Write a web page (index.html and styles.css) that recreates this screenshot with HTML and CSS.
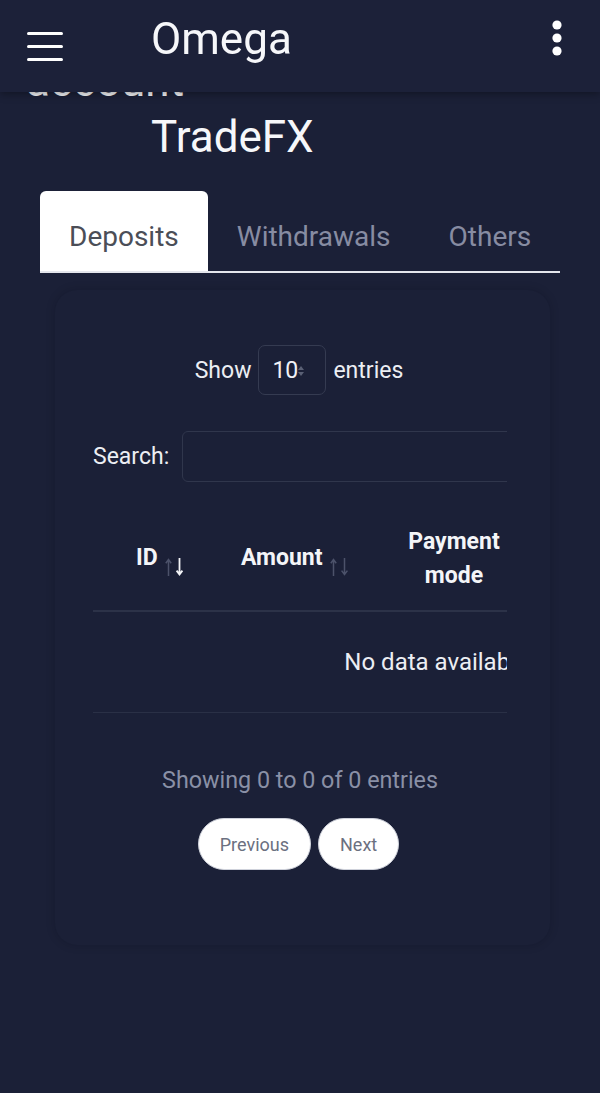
FILE: index.html
```html
<!DOCTYPE html>
<html lang="en">
<head>
    <meta charset="UTF-8">
    <title>Omega - Transactions</title>
    <link rel="stylesheet" href="styles.css">
</head>
<body>
    <header class="topbar">
        <button class="icon-btn menu-btn" aria-label="Menu">
            <svg width="36" height="30" viewBox="0 0 36 30">
                <rect x="0" y="1" width="36" height="3" rx="1.5" fill="#fff"/>
                <rect x="0" y="14" width="36" height="3" rx="1.5" fill="#fff"/>
                <rect x="0" y="27" width="36" height="3" rx="1.5" fill="#fff"/>
            </svg>
        </button>
        <div class="brand">Omega</div>
        <button class="icon-btn more-btn" aria-label="More">
            <svg width="10" height="36" viewBox="0 0 10 36">
                <circle cx="5" cy="5" r="4.6" fill="#fff"/>
                <circle cx="5" cy="18" r="4.6" fill="#fff"/>
                <circle cx="5" cy="31" r="4.6" fill="#fff"/>
            </svg>
        </button>
    </header>

    <main class="page">
        <div class="page-sub">account</div>
        <h1 class="page-title">TradeFX</h1>

        <nav class="tabs">
            <a class="tab active" href="#">Deposits</a>
            <a class="tab" href="#">Withdrawals</a>
            <a class="tab" href="#">Others</a>
        </nav>

        <section class="card">
            <div class="length-row">
                <span>Show</span>
                <div class="select">
                    10
                    <svg class="select-arrows" width="8" height="14" viewBox="0 0 8 14">
                        <path d="M1 6 L4 2 L7 6 Z" fill="#5a6075"/>
                        <path d="M1 8 L4 12 L7 8 Z" fill="#5a6075"/>
                    </svg>
                </div>
                <span>entries</span>
            </div>

            <div class="scroll-area">
                <div class="search-row">
                    <label for="search">Search:</label>
                    <input id="search" class="search-input" type="text">
                </div>

                <table class="data-table">
                    <colgroup>
                        <col style="width:120px">
                        <col style="width:177px">
                        <col style="width:128px">
                        <col style="width:176px">
                        <col style="width:170px">
                    </colgroup>
                    <thead>
                        <tr>
                            <th class="col-id">ID<span class="sort">
                                <svg width="20" height="20" viewBox="0 0 20 20">
                                    <path d="M4.5 19 V3 M1.8 6.2 L4.5 2.6 L7.2 6.2" stroke="#4c526a" stroke-width="1.5" fill="none"/>
                                    <path d="M15.5 1 V17 M12.6 13.6 L15.5 17.4 L18.4 13.6" stroke="#f4f5f8" stroke-width="1.8" fill="none"/>
                                </svg>
                            </span></th>
                            <th class="col-amount">Amount<span class="sort">
                                <svg width="20" height="20" viewBox="0 0 20 20">
                                    <path d="M4.5 19 V3 M1.8 6.2 L4.5 2.6 L7.2 6.2" stroke="#4c526a" stroke-width="1.5" fill="none"/>
                                    <path d="M15.5 1 V17 M12.6 13.6 L15.5 17.4 L18.4 13.6" stroke="#4c526a" stroke-width="1.5" fill="none"/>
                                </svg>
                            </span></th>
                            <th class="col-mode">Payment mode</th>
                            <th class="col-mode">Status</th>
                            <th class="col-mode">Date created</th>
                        </tr>
                    </thead>
                    <tbody>
                        <tr>
                            <td colspan="5" class="empty">No data available in table</td>
                        </tr>
                    </tbody>
                </table>
            </div>

            <div class="info">Showing 0 to 0 of 0 entries</div>

            <div class="pager">
                <button class="page-btn">Previous</button>
                <button class="page-btn">Next</button>
            </div>
        </section>
    </main>
</body>
</html>
```

FILE: styles.css
```css
body {
    margin: 0;
    background-color: #1b2037;
    font-family: Roboto, "Noto Sans", sans-serif;
    color: #eceef3;
    height: 1093px;
    overflow: hidden;
}

.topbar {
    position: fixed;
    top: 0;
    left: 0;
    right: 0;
    box-sizing: border-box;
    height: 92px;
    display: flex;
    align-items: center;
    padding: 0 27px;
    background-color: #1c2139;
    box-shadow: 0 2px 8px rgba(0, 0, 0, 0.35);
    z-index: 10;
}

.icon-btn {
    background: none;
    border: none;
    padding: 0;
    display: flex;
}

.menu-btn {
    margin-top: -1px;
}

.brand {
    margin-left: 88px;
    font-size: 44px;
    color: #f6f7fa;
    line-height: 1;
    margin-top: -14px;
}

.more-btn {
    margin-left: auto;
    margin-right: 11px;
    margin-top: -16px;
}

.page {
    padding-top: 53px;
}

.page-sub,
.page-title {
    font-size: 44px;
    line-height: 56px;
    font-weight: 400;
    color: #f6f7fa;
    margin: 0;
}

.page-sub {
    padding-left: 26px;
}

.page-title {
    padding-left: 151px;
}

.tabs {
    display: flex;
    margin: 26px 40px 0;
    border-bottom: 2px solid #e4e6ec;
}

.tab {
    font-size: 28px;
    line-height: 32px;
    padding: 30px 29px 18px;
    color: #878ca2;
    text-decoration: none;
    border-radius: 6px 6px 0 0;
}

.tab.active {
    background-color: #ffffff;
    color: #4b4e57;
}

.card {
    margin: 17px 50px 0 55px;
    padding: 55px 43px 75px 38px;
    border-radius: 22px;
    background-color: #1b2037;
    box-shadow: 0 0 10px rgba(5, 8, 20, 0.2);
}

.length-row {
    display: flex;
    justify-content: center;
    align-items: center;
    gap: 7px;
    font-size: 23px;
    margin-left: -2px;
}

.select {
    position: relative;
    width: 68px;
    height: 50px;
    box-sizing: border-box;
    border: 1.5px solid #353b51;
    border-radius: 7px;
    display: flex;
    align-items: center;
    padding-left: 13px;
    font-size: 23px;
    color: #f1f2f6;
}

.select-arrows {
    position: absolute;
    left: 38px;
    top: 18px;
}

.scroll-area {
    overflow: hidden;
    margin-top: 36px;
}

.search-row {
    display: flex;
    align-items: center;
    gap: 13px;
    font-size: 23px;
}

.search-input {
    flex: none;
    width: 400px;
    height: 51px;
    box-sizing: border-box;
    border: 1.5px solid #30364c;
    border-radius: 6px;
    background: transparent;
}

.data-table {
    table-layout: fixed;
    width: 771px;
    border-collapse: collapse;
    margin-top: 26px;
}

.data-table th {
    font-size: 23px;
    font-weight: 700;
    line-height: 34px;
    padding: 17px 0;
    border-bottom: 2px solid #2c3248;
    color: #f4f5f8;
    text-align: left;
    vertical-align: middle;
}

.col-id {
    padding-left: 43px !important;
}

.col-amount {
    padding-left: 28px !important;
}

.col-mode {
    text-align: center !important;
    padding: 17px 10px !important;
}

.sort {
    display: inline-block;
    margin-left: 6px;
    line-height: 0;
    vertical-align: -12px;
}

.empty {
    text-align: center;
    font-size: 24px;
    height: 100px;
    padding: 0;
    border-bottom: 1px solid #2a3046;
    color: #eceef3;
}

.info {
    text-align: center;
    font-size: 23.3px;
    line-height: 28px;
    color: #8a90a6;
    margin-top: 53px;
}

.pager {
    display: flex;
    justify-content: center;
    gap: 7px;
    margin-top: 24px;
    margin-left: -3px;
}

.page-btn {
    height: 52px;
    padding: 0 21px;
    border-radius: 26px;
    border: 1px solid #cfd2db;
    background-color: #ffffff;
    color: #6b7080;
    font-family: Roboto, "Noto Sans", sans-serif;
    font-size: 18px;
}
```
